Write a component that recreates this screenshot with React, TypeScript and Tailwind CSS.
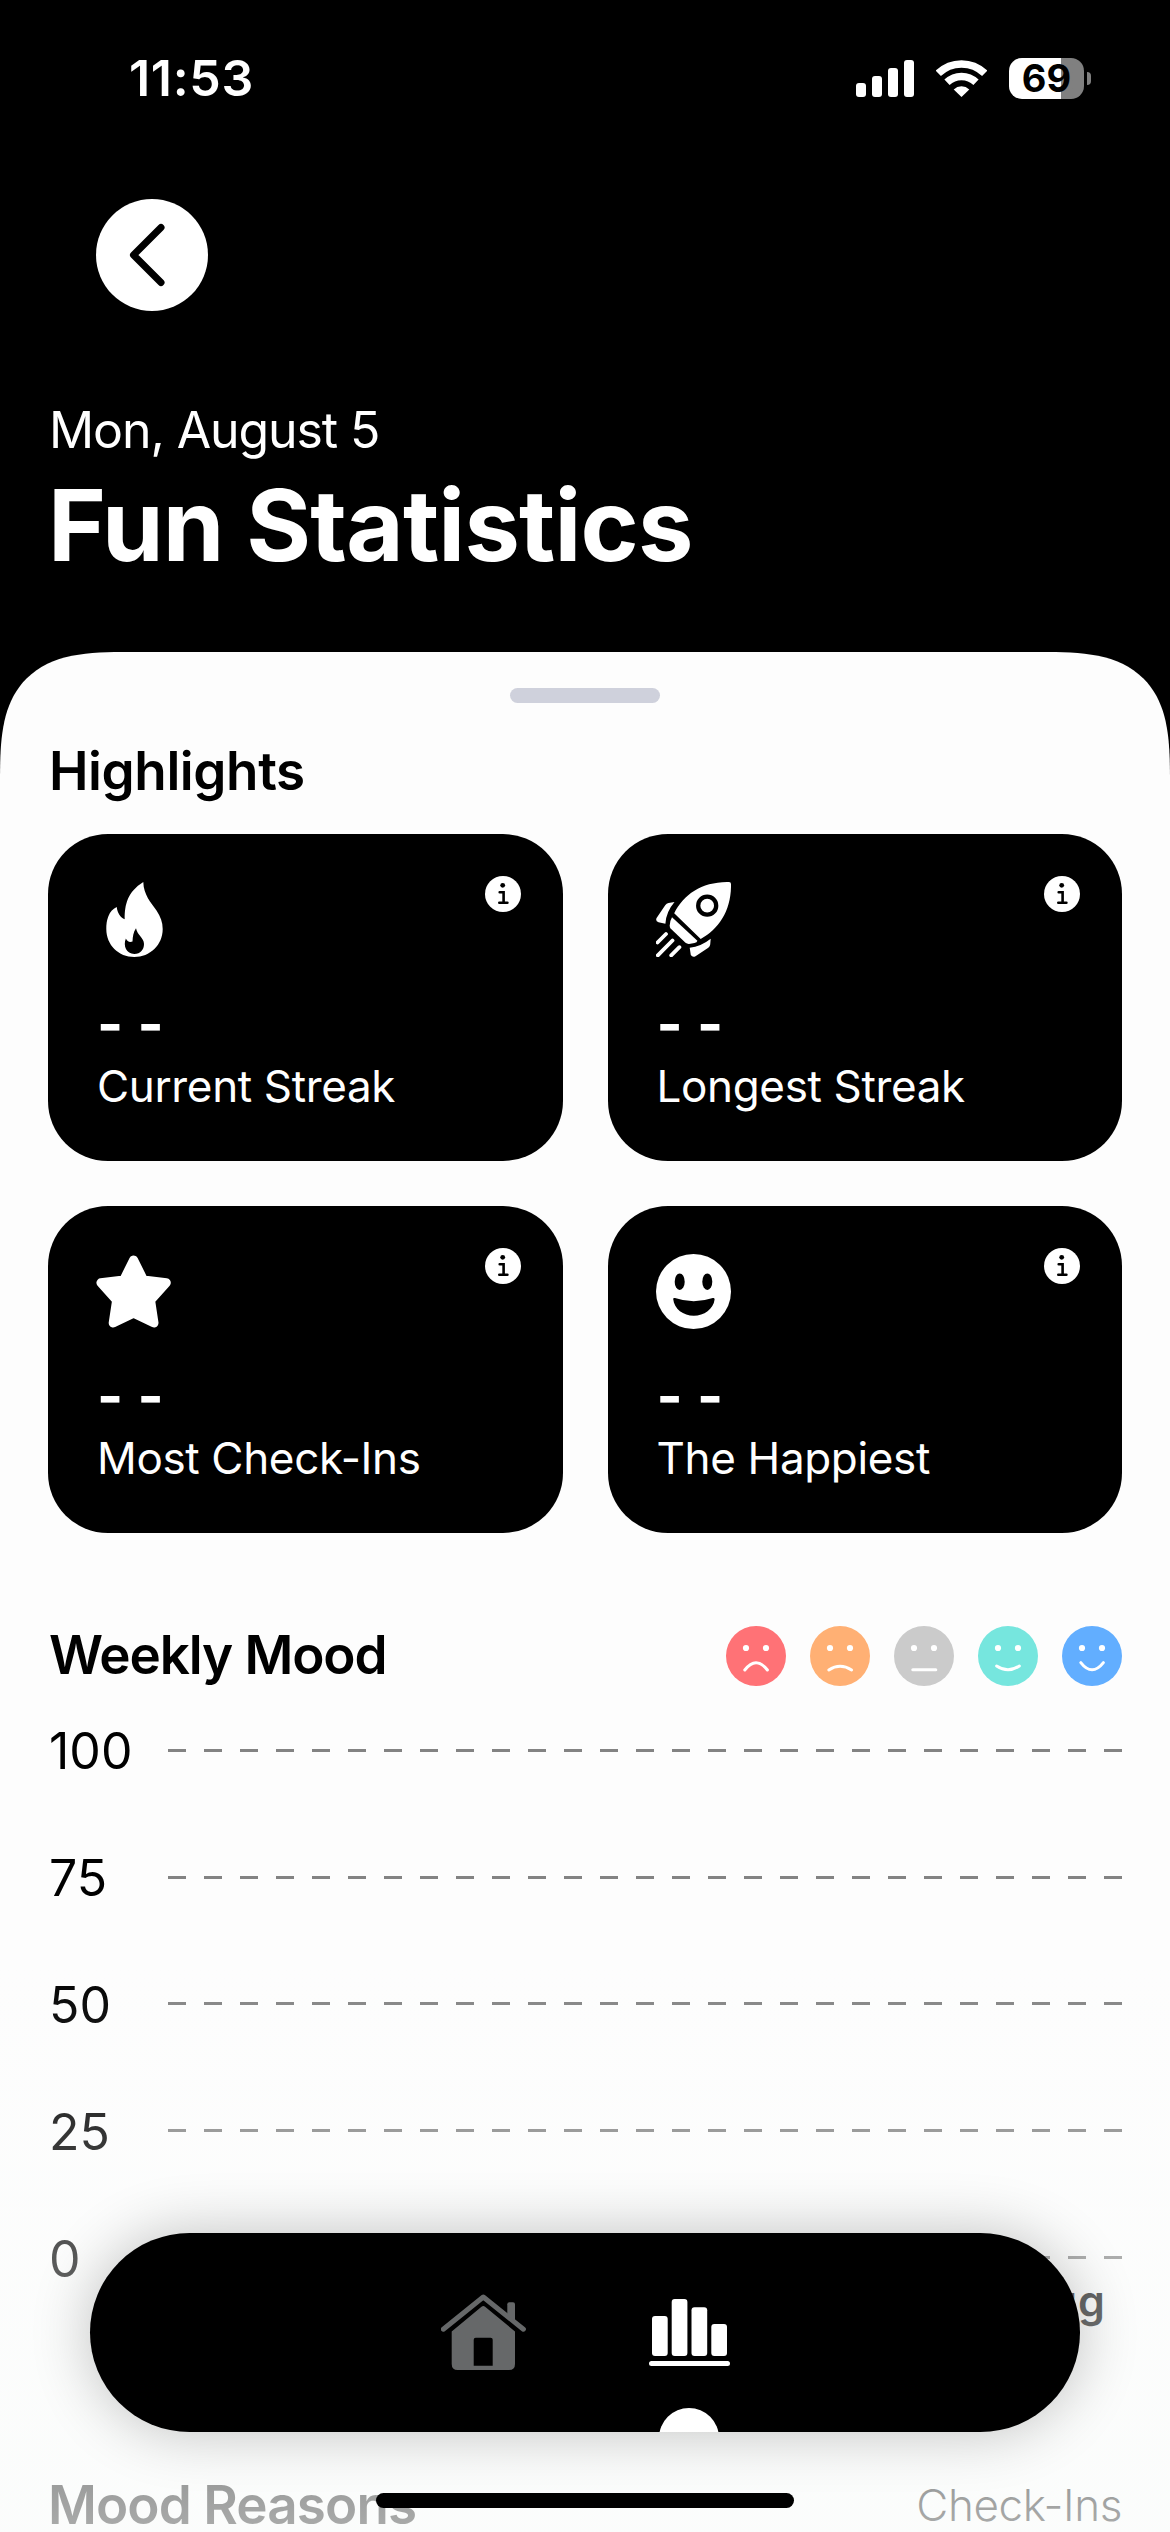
import type { ReactNode } from 'react';

interface HighlightCardProps {
  icon: ReactNode;
  label: string;
}

const FACES = [
  { color: '#ff7276', mouth: 'M18.8 44Q30 29.4 41.4 44' },
  { color: '#ffb074', mouth: 'M18.8 44Q30 36.6 41.6 44' },
  { color: '#cbcbcb', mouth: 'M18.8 43.7H41.8' },
  { color: '#76e6de', mouth: 'M18.6 40Q30 47.6 41.4 40' },
  { color: '#62aeff', mouth: 'M18.8 36.6Q30 51 41.4 36.6' },
];

const AXIS = [100, 75, 50, 25, 0];

function FlameIcon() {
  return (
    <svg viewBox="0 0 75 75" className="w-[75px] h-[75px]" fill="white">
      <path
        fillRule="evenodd"
        d="M47.300 0C47.600 13 55 20.500 60.500 28.500C64.500 34.500 66.700 40 66.700 47C66.700 63 54 75 38.300 75C22.500 75 10.300 63 10.300 47C10.300 38 12.500 29 20.700 25C21.500 31 24.300 35.500 28.700 37.300C28.600 22.500 31.500 10 47.300 0ZM40 46.300C37.300 50 36.800 54.500 36.500 59.600C33.500 60.500 31.200 59.600 29.900 56.600C26.800 64 30.500 72 38.300 72C44.500 72 48 67.500 48 62C48 56 41.500 53.500 40 46.300Z"
      />
    </svg>
  );
}

function RocketIcon() {
  return (
    <svg viewBox="0 0 75 75" className="w-[75px] h-[75px]" fill="white">
      <path d="M18.200 31.300C28 12 46 -.3 73 0Q75 0 75 2C75.500 28 63 47 44.700 57Z" />
      <circle cx="51.200" cy="23.700" r="9" stroke="black" strokeWidth="4.300" />
      <path d="M16 35.300L41.400 58.700Q41 60.500 38.500 61L33 61.900Q31 62 29.500 60.800L14.600 46.600Q13.600 45.500 13.700 43.500Q14 38.500 16 35.300Z" />
      <path d="M18.500 20L12.500 21Q10.500 21.300 9.200 23.300L.6 36Q-.8 39 2.500 40.300L9.400 41.700Q10 30 18.500 20Z" />
      <path d="M54.700 56.700L54.200 62.500Q54 64.500 52.300 65.700L39.500 74.300Q36.500 75.800 34.800 73L33.700 65.700Q45 64.500 54.700 56.700Z" />
      <path
        d="M10 52L1.500 60.500M16.500 58.500L1.800 73.300M23.400 65.200L15.200 73.300"
        fill="none"
        stroke="white"
        strokeWidth="3.800"
        strokeLinecap="round"
      />
    </svg>
  );
}

function StarIcon() {
  return (
    <svg viewBox="0 0 75 75" className="w-[75px] h-[75px]">
      <path
        d="M37.600 6L47.500 25.900L70.300 28.800L54.600 46.300L58 69L37.600 59.300L17.200 69L20.600 46.300L4.900 28.800L27.700 25.900Z"
        fill="white"
        stroke="white"
        strokeWidth="9"
        strokeLinejoin="round"
      />
    </svg>
  );
}

function GrinIcon() {
  return (
    <svg viewBox="0 0 75 75" className="w-[75px] h-[75px]">
      <circle cx="37.500" cy="37.500" r="37.500" fill="white" />
      <ellipse cx="23.700" cy="27.700" rx="5" ry="8.300" />
      <ellipse cx="51.300" cy="27.700" rx="5" ry="8.300" />
      <path d="M17.200 45Q17.200 43.500 19 44.100Q37.500 50.500 56.800 44.100Q58.800 43.500 58.600 45.500C57.500 55 48 61.800 37.800 61.800C27.500 61.800 18 55 17.200 45Z" />
    </svg>
  );
}

function InfoIcon() {
  return (
    <svg viewBox="0 0 36 36" className="w-9 h-9">
      <circle cx="18" cy="18" r="18" fill="white" />
      <circle cx="17.700" cy="9.300" r="2.400" />
      <path
        d="M14.700 16.200H18.600V26.800M14.300 26.800H22.400"
        fill="none"
        stroke="black"
        strokeWidth="2.600"
        strokeLinecap="round"
      />
    </svg>
  );
}

function HighlightCard({ icon, label }: HighlightCardProps) {
  return (
    <div className="h-[327px] rounded-[60px] bg-black pt-[42px] pl-12 pr-[42px] text-white">
      <div className="flex items-start justify-between">
        <div className="mt-1.5">{icon}</div>
        <InfoIcon />
      </div>
      <p className="mt-[34px] h-16 pl-px text-[56px] leading-[66px] font-bold [word-spacing:1px]">- -</p>
      <p className="pl-px text-[44px] leading-[62px] tracking-[-0.35px] whitespace-nowrap">{label}</p>
    </div>
  );
}

function StatusBar() {
  return (
    <div className="flex h-[156px] shrink-0 items-center justify-between pl-[129px] pr-[79px]">
      <span className="text-[50px] leading-none font-semibold tracking-[0.7px]">11:53</span>
      <div className="flex items-center">
        <svg viewBox="0 0 58 37" className="w-[58px] h-[37px]" fill="white">
          <rect x="0" y="23" width="10" height="14" rx="3" />
          <rect x="16" y="16" width="10" height="21" rx="3" />
          <rect x="32" y="8" width="10" height="29" rx="3" />
          <rect x="48" y="0" width="10" height="37" rx="3" />
        </svg>
        <svg viewBox="0 0 51 37" className="ml-[22px] w-[51px] h-[37px]" fill="none" stroke="white" strokeWidth="7.500">
          <path d="M2.300 13.300A33.300 33.300 0 0 1 48.700 13.300" />
          <path d="M11 22.300A20.800 20.800 0 0 1 40 22.300" />
          <path d="M25.500 37L17.700 29.400A11.500 11.500 0 0 1 33.300 29.400Z" fill="white" stroke="none" />
        </svg>
        <div className="ml-[22px] flex h-[41px] w-[75px] items-center justify-center rounded-[13px] bg-linear-to-r from-white from-[69%] to-[#808080] to-[69%]">
          <span className="text-[38px] leading-none font-bold text-black">69</span>
        </div>
        <div className="ml-[3px] h-[13px] w-1 rounded-r-full bg-[#808080]" />
      </div>
    </div>
  );
}

function TabBar() {
  return (
    <nav className="absolute left-[90px] top-[2233px] h-[199px] w-[990px] rounded-full bg-black shadow-[0_0_60px_rgba(0,0,0,0.24)]">
      <div className="flex h-full justify-center gap-[123px] overflow-hidden rounded-full">
        <svg viewBox="0 0 85 76" className="mt-[61px] w-[85px] h-[76px]" fill="#666869">
          <path d="M2.300 35.200L42.300 3L82.400 35.200" fill="none" stroke="#666869" strokeWidth="5" strokeLinecap="round" strokeLinejoin="round" />
          <path d="M66.300 21V10.300Q66.300 8.300 68.300 8.300H72Q74 8.300 74 10.300V27.500Z" />
          <path
            fillRule="evenodd"
            d="M10.700 37.500L40.500 12.800Q42.300 11 44.100 12.800L74 37.500V70Q74 76 68 76H16.700Q10.700 76 10.700 70ZM34.700 43.700Q32.700 43.700 32.700 45.700V71.700H51.700V45.700Q51.700 43.700 49.700 43.700Z"
          />
        </svg>
        <div className="flex w-[81px] flex-col items-center">
          <svg viewBox="0 0 81 67" className="mt-[66px] w-[81px] h-[67px] shrink-0" fill="white">
            <rect x="3" y="17" width="15.700" height="40" rx="3" />
            <rect x="22.700" y="0" width="15.700" height="57" rx="3" />
            <rect x="42.500" y="8.300" width="15.700" height="48.700" rx="3" />
            <rect x="62.300" y="25" width="15.700" height="32" rx="3" />
            <rect x="0" y="62" width="81" height="5" rx="2.500" />
          </svg>
          {/* アクティブタブの印 */}
          <div className="mt-[42px] h-[60px] w-[60px] shrink-0 rounded-full bg-white" />
        </div>
      </div>
    </nav>
  );
}

export default function App() {
  return (
    <div className="relative flex h-[2532px] w-[1170px] flex-col overflow-hidden bg-black font-['Inter','Liberation_Sans',sans-serif] text-white">
      <StatusBar />

      {/* ヘッダー */}
      <header className="shrink-0 px-12">
        <button className="mt-[43px] ml-12 flex h-28 w-28 items-center justify-center rounded-full bg-white">
          <svg viewBox="0 0 112 112" className="h-28 w-28" fill="none" stroke="black" strokeWidth="7" strokeLinecap="round" strokeLinejoin="round">
            <path d="M65 28.500L37.500 56L65 83.500" />
          </svg>
        </button>
        <p className="mt-[89px] pl-px text-[50px] leading-[60px] tracking-[-1.1px]">Mon, August 5</p>
        <h1 className="mt-[5px] text-[99px] leading-[120px] font-bold tracking-[-0.8px]">Fun Statistics</h1>
      </header>

      <main className="mt-[67px] flex flex-1 flex-col rounded-t-[90px] bg-[#fdfdfd] px-12 pt-9 text-black supports-[corner-shape:squircle]:rounded-t-[130px] supports-[corner-shape:squircle]:[corner-shape:superellipse(1.6)]">
        <div className="h-[15px] w-[150px] shrink-0 self-center rounded-full bg-[#cfd1dc]" />
        <h2 className="mt-[35px] pl-px text-[53px] leading-[66px] font-semibold tracking-[-0.4px]">Highlights</h2>
        <div className="mt-[30px] grid grid-cols-2 gap-[45px]">
          <HighlightCard icon={<FlameIcon />} label="Current Streak" />
          <HighlightCard icon={<RocketIcon />} label="Longest Streak" />
          <HighlightCard icon={<StarIcon />} label="Most Check-Ins" />
          <HighlightCard icon={<GrinIcon />} label="The Happiest" />
        </div>

        {/* 週間グラフ */}
        <div className="mt-[93px] flex h-[60px] items-center justify-between">
          <h2 className="pb-0.5 pl-px text-[53px] leading-none font-semibold tracking-[-1.1px]">Weekly Mood</h2>
          <div className="flex gap-6">
            {FACES.map((face) => (
              <svg key={face.color} viewBox="0 0 60 60" className="h-[60px] w-[60px]">
                <circle cx="30" cy="30" r="30" fill={face.color} />
                <circle cx="20" cy="22" r="3.100" fill="white" />
                <circle cx="40" cy="22" r="3.100" fill="white" />
                <path d={face.mouth} fill="none" stroke="white" strokeWidth="3" strokeLinecap="round" />
              </svg>
            ))}
          </div>
        </div>
        <div className="mt-px">
          {AXIS.map((value) => (
            <div key={value} className="flex h-[126.800px] items-center">
              <span className="w-[120px] pt-0.5 pl-px text-[50px] leading-none">{value}</span>
              <svg viewBox="0 0 954 3" className="h-[3px] w-[954px]">
                <line x1="0" y1="1.500" x2="954" y2="1.500" stroke="#838383" strokeWidth="3" strokeDasharray="18 18" />
              </svg>
            </div>
          ))}
        </div>
        <p className="-mt-[50px] pr-4 text-right text-[43px] leading-[60px] font-semibold tracking-[1px]">Aug</p>
        <div className="mt-[147px] flex h-[54px] items-center justify-between">
          <h2 className="text-[53px] leading-[54px] font-semibold tracking-[-0.9px]">Mood Reasons</h2>
          <span className="text-[44px] leading-[54px] font-light tracking-[-0.4px]">Check-Ins</span>
        </div>
      </main>

      {/* 下端のフェード */}
      <div className="absolute inset-x-0 bottom-0 h-[572px] bg-linear-to-b from-[#fafcfb]/0 to-[#fafcfb]/68" />
      <TabBar />
      <div className="absolute left-[376px] top-[2493px] h-[15px] w-[418px] rounded-full bg-black" />
    </div>
  );
}
